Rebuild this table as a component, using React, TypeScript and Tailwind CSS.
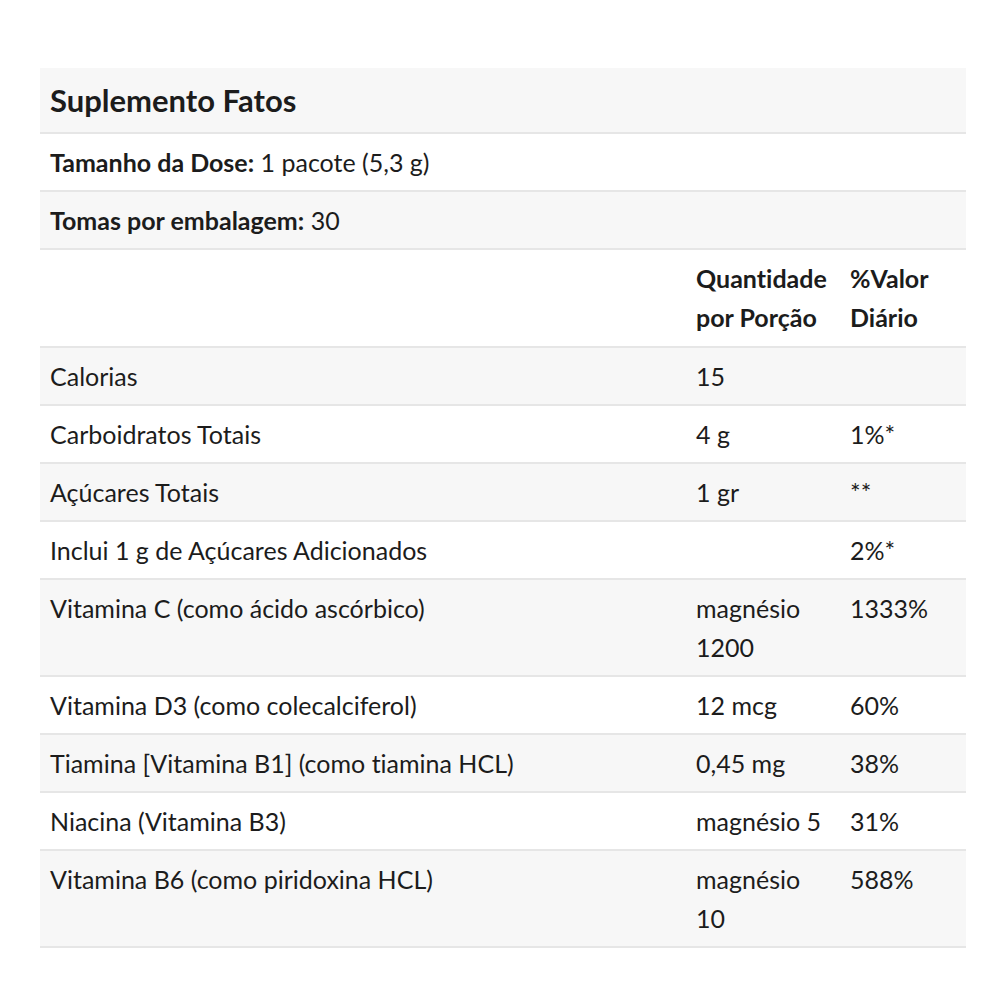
const linhas: { nome: string; qtd: string; vd: string }[] = [
  { nome: "Calorias", qtd: "15", vd: "" },
  { nome: "Carboidratos Totais", qtd: "4 g", vd: "1%*" },
  { nome: "Açúcares Totais", qtd: "1 gr", vd: "**" },
  { nome: "Inclui 1 g de Açúcares Adicionados", qtd: "", vd: "2%*" },
  { nome: "Vitamina C (como ácido ascórbico)", qtd: "magnésio 1200", vd: "1333%" },
  { nome: "Vitamina D3 (como colecalciferol)", qtd: "12 mcg", vd: "60%" },
  { nome: "Tiamina [Vitamina B1] (como tiamina HCL)", qtd: "0,45 mg", vd: "38%" },
  { nome: "Niacina (Vitamina B3)", qtd: "magnésio 5", vd: "31%" },
  { nome: "Vitamina B6 (como piridoxina HCL)", qtd: "magnésio 10", vd: "588%" },
];

export default function App() {
  return (
    <div className="w-[1000px] h-[1000px] bg-white pt-[68px] px-[40px] text-[#1c1c1c] font-['Lato','Noto_Sans',sans-serif] [font-variant-ligatures:none]">
      <div className="w-[926px] text-[25px] leading-[39px]">
        <div className="bg-[#f7f7f7] border-b-2 border-[#e6e6e6] h-[66px] px-[10px] flex items-center">
          <span className="text-[31px] font-bold">Suplemento Fatos</span>
        </div>
        <div className="border-b-2 border-[#e6e6e6] h-[58px] px-[10px] flex items-center">
          <span><b>Tamanho da Dose:</b> 1 pacote (5,3 g)</span>
        </div>
        <div className="bg-[#f7f7f7] border-b-2 border-[#e6e6e6] h-[58px] px-[10px] flex items-center">
          <span><b>Tomas por embalagem:</b> 30</span>
        </div>
        <div className="grid grid-cols-[646px_154px_126px] border-b-2 border-[#e6e6e6] pt-[9px] pb-[9px] font-bold">
          <div />
          <div className="px-[10px]">Quantidade por Porção</div>
          <div className="px-[10px]">%Valor Diário</div>
        </div>
        {linhas.map((l, i) => (
          <div
            key={l.nome}
            className={`grid grid-cols-[646px_154px_126px] border-b-2 border-[#e6e6e6] pt-[9px] pb-[8px] ${
              i % 2 === 0 ? "bg-[#f7f7f7]" : "bg-white"
            }`}
          >
            <div className="px-[10px]">{l.nome}</div>
            <div className="px-[10px]">{l.qtd}</div>
            <div className="px-[10px]">{l.vd}</div>
          </div>
        ))}
      </div>
    </div>
  );
}
